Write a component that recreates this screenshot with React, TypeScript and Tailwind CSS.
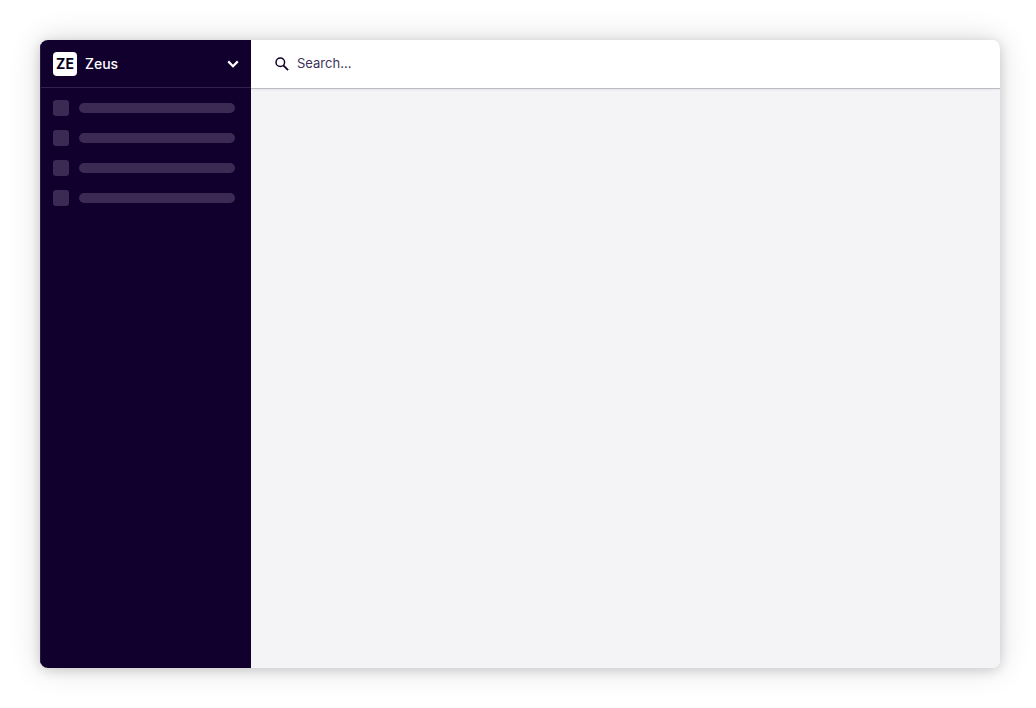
import { useState } from "react";

const NAV_PLACEHOLDERS = [1, 2, 3, 4];

const ChevronIcon = () => (
  <svg width="12" height="8" viewBox="0 0 12 8" fill="none" aria-hidden="true">
    <path d="M1.2 1.4 6 6.2l4.8-4.8" stroke="currentColor" strokeWidth="2.2" />
  </svg>
);

const SearchIcon = () => (
  <svg width="14" height="14" viewBox="0 0 14 14" fill="none" aria-hidden="true">
    <circle cx="5.3" cy="5.3" r="4.3" stroke="currentColor" strokeWidth="1.5" />
    <path d="m8.3 8.3 4.8 4.8" stroke="currentColor" strokeWidth="1.8" />
  </svg>
);

const Sidebar: React.FC = () => {
  return (
    <aside className="w-[211px] shrink-0 bg-[#11002d] border-l border-[#291746]">
      <button
        type="button"
        className="flex w-full h-12 items-center gap-2 px-3 border-b border-[#33224b] text-white"
      >
        <span className="flex w-6 h-6 items-center justify-center rounded-sm bg-white text-sm font-bold text-[#08001a]">
          ZE
        </span>
        <span className="text-sm font-medium">Zeus</span>
        <span className="ml-auto">
          <ChevronIcon />
        </span>
      </button>
      <ul className="flex flex-col gap-3.5 pl-3 pr-4 pt-3">
        {NAV_PLACEHOLDERS.map((item) => (
          <li key={item} className="flex items-center gap-2.5">
            <span className="w-4 h-4 rounded-[3px] bg-[#3c2a55]" />
            <span className="h-2.5 flex-1 rounded-full bg-[#3c2a55]" />
          </li>
        ))}
      </ul>
    </aside>
  );
};

const SearchHeader: React.FC = () => {
  const [searchTerm, setSearchTerm] = useState("");

  return (
    <header className="flex h-12 items-center bg-white px-6 shadow-[0_1px_0_#bdbac3,0_2px_2px_rgba(18,0,45,0.06)]">
      <label htmlFor="search" className="text-[#11002d]">
        <SearchIcon />
      </label>
      <input
        id="search"
        type="text"
        aria-label="Search"
        placeholder="Search..."
        value={searchTerm}
        onChange={(e) => setSearchTerm(e.target.value)}
        className="min-w-0 flex-1 bg-transparent px-2 text-[13px] text-[#11002d] placeholder-[#41335a] outline-none"
      />
    </header>
  );
};

export default function App() {
  return (
    <div className="min-h-screen flex bg-white py-10 pl-10 pr-9 font-[Inter,sans-serif]">
      <div className="flex flex-1 overflow-hidden rounded-lg shadow-[0_0_32px_rgba(0,0,0,0.14),0_2px_12px_rgba(0,0,0,0.16)]">
        <Sidebar />
        <main className="min-w-0 flex-1 bg-[#f4f4f6]">
          <SearchHeader />
        </main>
      </div>
    </div>
  );
}
